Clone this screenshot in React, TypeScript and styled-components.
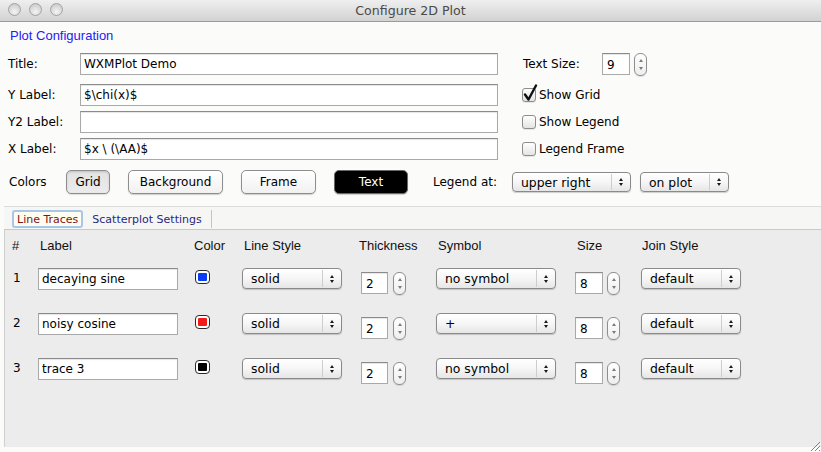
import React from "react";
import styled, { createGlobalStyle, css } from "styled-components";

const GlobalStyle = createGlobalStyle`
  html, body {
    margin: 0;
    padding: 0;
    background: #fbfbfa;
  }
  body {
    font-family: "DejaVu Sans", "Liberation Sans", sans-serif;
    font-size: 12px;
    color: #000;
    overflow: hidden;
  }
  * {
    box-sizing: border-box;
  }
`;

interface Trace {
  id: number;
  label: string;
  color: string;
  style: string;
  thickness: number;
  symbol: string;
  size: number;
  join: string;
}

const traces: Trace[] = [
  { id: 1, label: "decaying sine", color: "#0a3cf5", style: "solid", thickness: 2, symbol: "no symbol", size: 8, join: "default" },
  { id: 2, label: "noisy cosine", color: "#f51a1a", style: "solid", thickness: 2, symbol: "+", size: 8, join: "default" },
  { id: 3, label: "trace 3", color: "#000000", style: "solid", thickness: 2, symbol: "no symbol", size: 8, join: "default" },
];

const formRows = [
  { label: "Title:", value: "WXMPlot Demo" },
  { label: "Y Label:", value: "$\\chi(x)$" },
  { label: "Y2 Label:", value: "" },
  { label: "X Label:", value: "$x \\ (\\AA)$" },
];

const Popup = ({ value, width, height = 21 }: { value: string; width: number; height?: number }) => (
  <PopupBox $width={width} $height={height}>
    <PopupText>{value}</PopupText>
    <PopupArrows>
      <ArrowUp $dark />
      <ArrowDown $dark />
    </PopupArrows>
  </PopupBox>
);

const Stepper = () => (
  <StepperBox>
    <ArrowUp />
    <ArrowDown />
  </StepperBox>
);

const CheckBox = ({ checked, label }: { checked?: boolean; label: string }) => (
  <CheckRow>
    <Box>
      {checked && (
        <CheckMark viewBox="0 0 16 18" width="16" height="18">
          <path d="M3 10.5 L6.5 15.5 L14 1.5" fill="none" stroke="#111" strokeWidth="2.4" strokeLinecap="round" strokeLinejoin="round" />
        </CheckMark>
      )}
    </Box>
    <span>{label}</span>
  </CheckRow>
);

const App: React.FC = () => {
  return (
    <>
      <GlobalStyle />
      <Window>
        <TitleBar>
          <Lights>
            <Light />
            <Light />
            <Light />
          </Lights>
          <WindowTitle>Configure 2D Plot</WindowTitle>
          <span />
        </TitleBar>

        <SectionTitle>Plot Configuration</SectionTitle>

        <FormGrid>
          {formRows.map((row, i) => (
            <React.Fragment key={row.label}>
              <FieldLabel>{row.label}</FieldLabel>
              <TextField readOnly value={row.value} />
              <span />
              {i === 0 && (
                <OptionRow>
                  <TextSizeLabel>Text Size:</TextSizeLabel>
                  <SmallField readOnly value="9" $width={28} />
                  <Stepper />
                </OptionRow>
              )}
              {i === 1 && <CheckBox checked label="Show Grid" />}
              {i === 2 && <CheckBox label="Show Legend" />}
              {i === 3 && <CheckBox label="Legend Frame" />}
            </React.Fragment>
          ))}
        </FormGrid>

        <ColorsRow>
          <ColorsLabel>Colors</ColorsLabel>
          <ColorButton $width={44} $variant="pressed">Grid</ColorButton>
          <ColorButton $width={95}>Background</ColorButton>
          <ColorButton $width={75}>Frame</ColorButton>
          <ColorButton $width={74} $variant="dark">Text</ColorButton>
          <LegendLabel>Legend at:</LegendLabel>
          <Popup value="upper right" width={119} height={20} />
          <Spacer />
          <Popup value="on plot" width={89} height={20} />
        </ColorsRow>

        <TabArea>
          <TabStrip>
            <Tab $active>Line Traces</Tab>
            <Tab>Scatterplot Settings</Tab>
            <TabDivider />
          </TabStrip>
          <TabPanel>
            <TraceGrid>
              <HeadCell>#</HeadCell>
              <HeadCell $indent={2}>Label</HeadCell>
              <HeadCell>Color</HeadCell>
              <HeadCell $indent={2}>Line Style</HeadCell>
              <HeadCell>Thickness</HeadCell>
              <HeadCell $indent={2}>Symbol</HeadCell>
              <HeadCell $indent={2}>Size</HeadCell>
              <HeadCell $indent={1}>Join Style</HeadCell>

              {traces.map((t) => (
                <React.Fragment key={t.id}>
                  <RowNumber>{t.id}</RowNumber>
                  <TextField readOnly value={t.label} style={{ width: 140 }} />
                  <Swatch>
                    <SwatchFill style={{ background: t.color }} />
                  </Swatch>
                  <Popup value={t.style} width={100} />
                  <SpinGroup $indent={2} $gap={5}>
                    <SmallField readOnly value={String(t.thickness)} $width={27} />
                    <Stepper />
                  </SpinGroup>
                  <Popup value={t.symbol} width={120} />
                  <SpinGroup $indent={0} $gap={4}>
                    <SmallField readOnly value={String(t.size)} $width={28} />
                    <Stepper />
                  </SpinGroup>
                  <Popup value={t.join} width={100} />
                </React.Fragment>
              ))}
            </TraceGrid>
          </TabPanel>
        </TabArea>

        <Grip viewBox="0 0 12 12" width="12" height="12">
          <path d="M11 2 L2 11 M11 6 L6 11 M11 10 L10 11" stroke="#808080" strokeWidth="1" />
          <path d="M12 3 L3 12 M12 7 L7 12" stroke="#fff" strokeWidth="1" />
        </Grip>
      </Window>
    </>
  );
};

// Styled components
const Window = styled.div`
  position: relative;
  width: 821px;
  height: 452px;
  display: flex;
  flex-direction: column;
  background: #fbfbfa;
  overflow: hidden;
`;

const TitleBar = styled.div`
  flex: none;
  height: 22px;
  display: grid;
  grid-template-columns: 1fr auto 1fr;
  align-items: center;
  background: linear-gradient(#efefef, #d2d2d2);
  border-bottom: 1px solid #9b9b9b;
`;

const Lights = styled.div`
  display: flex;
  gap: 8px;
  padding-left: 8px;
  margin-top: -2px;
`;

const Light = styled.span`
  width: 13px;
  height: 13px;
  border-radius: 50%;
  border: 1px solid #a3a3a3;
  background: radial-gradient(circle at 50% 70%, #f4f4f4 0%, #d9d9d9 55%, #c2c2c2 100%);
`;

const WindowTitle = styled.div`
  font-size: 12.6px;
  color: #4a4a4a;
  margin-top: -1px;
`;

const SectionTitle = styled.div`
  margin: 6px 0 0 10px;
  line-height: 16px;
  font-family: "Liberation Sans", Arial, sans-serif;
  font-size: 13px;
  color: #2222f2;
`;

const FormGrid = styled.div`
  display: grid;
  grid-template-columns: 72px 418px 24px auto;
  grid-template-rows: 26px 22px 22px 22px;
  row-gap: 5px;
  align-items: start;
  margin: 9px 0 0 8px;
`;

const FieldLabel = styled.div`
  line-height: 22px;
`;

const fieldBase = css`
  height: 22px;
  border: 1px solid #a9a9a9;
  border-top-color: #8a8a8a;
  background: #fff;
  box-shadow: inset 0 1px 1px rgba(0, 0, 0, 0.1);
  font-family: "DejaVu Sans", sans-serif;
  font-size: 12px;
  color: #000;
  outline: none;
  margin: 0;
`;

const TextField = styled.input`
  ${fieldBase}
  width: 100%;
  padding: 0 3px;
`;

const SmallField = styled.input<{ $width: number }>`
  ${fieldBase}
  width: ${(p) => p.$width}px;
  padding: 2px 4px 0;
`;

const OptionRow = styled.div`
  display: flex;
  align-items: flex-start;
  gap: 4px;
`;

const TextSizeLabel = styled.span`
  width: 75px;
  margin-left: 1px;
  line-height: 22px;
`;

const CheckRow = styled.label`
  display: flex;
  align-items: center;
  gap: 3px;
  height: 22px;
`;

const Box = styled.span`
  position: relative;
  width: 14px;
  height: 14px;
  border: 1px solid #8d8d8d;
  border-radius: 3px;
  background: linear-gradient(#ffffff, #e4e4e4);
  box-shadow: 0 1px 0 rgba(0, 0, 0, 0.08);
`;

const CheckMark = styled.svg`
  position: absolute;
  left: -1px;
  top: -5px;
`;

const ColorsRow = styled.div`
  display: flex;
  align-items: center;
  height: 24px;
  margin: 10px 0 0 9px;
`;

const ColorsLabel = styled.span`
  width: 57px;
`;

const ColorButton = styled.div<{ $width: number; $variant?: "pressed" | "dark" }>`
  width: ${(p) => p.$width}px;
  height: 24px;
  margin-right: 18px;
  display: flex;
  align-items: center;
  justify-content: center;
  border: 1px solid #8e8e8e;
  border-radius: 5px;
  background: linear-gradient(#ffffff, #f1f1f1);
  box-shadow: 0 1px 1px rgba(0, 0, 0, 0.18);
  ${(p) =>
    p.$variant === "pressed" &&
    css`
      background: linear-gradient(#e2e2e2, #ececec);
      box-shadow: inset 0 1px 2px rgba(0, 0, 0, 0.15), 0 1px 1px rgba(0, 0, 0, 0.12);
    `}
  ${(p) =>
    p.$variant === "dark" &&
    css`
      background: #000;
      color: #fff;
      border-color: #6a6a6a;
      margin-right: 25px;
    `}
`;

const LegendLabel = styled.span`
  width: 79px;
`;

const Spacer = styled.span`
  width: 9px;
`;

const PopupBox = styled.div<{ $width: number; $height: number }>`
  width: ${(p) => p.$width}px;
  height: ${(p) => p.$height}px;
  display: flex;
  align-items: stretch;
  border: 1px solid #8a8a8a;
  border-radius: 4px;
  background: linear-gradient(#ffffff 0%, #f6f6f6 50%, #e6e6e6 100%);
  box-shadow: 0 1px 1px rgba(0, 0, 0, 0.18);
  font-size: 12.4px;
`;

const PopupText = styled.span`
  flex: 1;
  padding-left: 8px;
  display: flex;
  align-items: center;
  white-space: nowrap;
  overflow: hidden;
`;

const PopupArrows = styled.span`
  width: 19px;
  margin: 1px 0;
  border-left: 1px solid #cdcdcd;
  display: flex;
  flex-direction: column;
  align-items: center;
  justify-content: center;
  gap: 2px;
`;

const ArrowUp = styled.span<{ $dark?: boolean }>`
  width: 0;
  height: 0;
  border-left: 2.5px solid transparent;
  border-right: 2.5px solid transparent;
  border-bottom: 3.5px solid ${(p) => (p.$dark ? "#1a1a1a" : "#7a7a7a")};
`;

const ArrowDown = styled.span<{ $dark?: boolean }>`
  width: 0;
  height: 0;
  border-left: 2.5px solid transparent;
  border-right: 2.5px solid transparent;
  border-top: 3.5px solid ${(p) => (p.$dark ? "#1a1a1a" : "#7a7a7a")};
`;

const StepperBox = styled.span`
  width: 13px;
  height: 23px;
  display: flex;
  flex-direction: column;
  align-items: center;
  justify-content: space-between;
  padding: 5px 0;
  border: 1px solid #8f8f8f;
  border-radius: 6px;
  background: linear-gradient(#ffffff, #eeeeee);
  box-shadow: 0 1px 1px rgba(0, 0, 0, 0.12);
`;

const TabArea = styled.div`
  flex: 1;
  display: flex;
  flex-direction: column;
  margin: 12px 0 5px 4px;
  min-height: 0;
`;

const TabStrip = styled.div`
  flex: none;
  height: 24px;
  display: flex;
  align-items: flex-start;
  padding-left: 8px;
  border-top: 1px solid #dcdcdc;
  border-bottom: 1px solid #c9c9c9;
  background: #f6f6f5;
`;

const Tab = styled.div<{ $active?: boolean }>`
  margin-top: 3px;
  height: 18px;
  padding: 0 3px;
  display: flex;
  align-items: center;
  font-size: 11px;
  color: #28287a;
  margin-left: 6px;
  ${(p) =>
    p.$active &&
    css`
      margin-left: 0;
      border: 2px solid #a8c6e6;
      border-radius: 3px;
      background: #fffdf0;
      color: #7b1414;
    `}
`;

const TabDivider = styled.span`
  margin: 3px 0 0 6px;
  width: 1px;
  height: 18px;
  background: #c4c4c4;
`;

const TabPanel = styled.div`
  flex: 1;
  background: #ececec;
  border-left: 1px solid #cfcfcf;
  padding: 6px 0 0 7px;
`;

const TraceGrid = styled.div`
  display: grid;
  grid-template-columns: 26px 156px 48px 117px 77px 139px 66px 100px;
  grid-template-rows: 32px 45px 45px 45px;
  align-items: start;
`;

const HeadCell = styled.div<{ $indent?: number }>`
  padding-left: ${(p) => p.$indent || 0}px;
  line-height: 20px;
  font-family: "Liberation Sans", Arial, sans-serif;
  font-size: 13px;
  color: #111;
  white-space: nowrap;
`;

const RowNumber = styled.div`
  line-height: 22px;
  margin-top: -1px;
  padding-left: 1px;
`;

const Swatch = styled.span`
  display: flex;
  width: 15px;
  height: 14px;
  margin: 2px 0 0 1px;
  padding: 2px;
  border: 1px solid #2a2a2a;
  border-radius: 4px;
  background: #fff;
`;

const SwatchFill = styled.span`
  flex: 1;
  border-radius: 1px;
`;

const SpinGroup = styled.div<{ $indent: number; $gap: number }>`
  display: flex;
  align-items: flex-start;
  gap: ${(p) => p.$gap}px;
  margin: 4px 0 0 ${(p) => p.$indent}px;
`;

const Grip = styled.svg`
  position: absolute;
  right: 0;
  bottom: 0;
`;

export default App;
